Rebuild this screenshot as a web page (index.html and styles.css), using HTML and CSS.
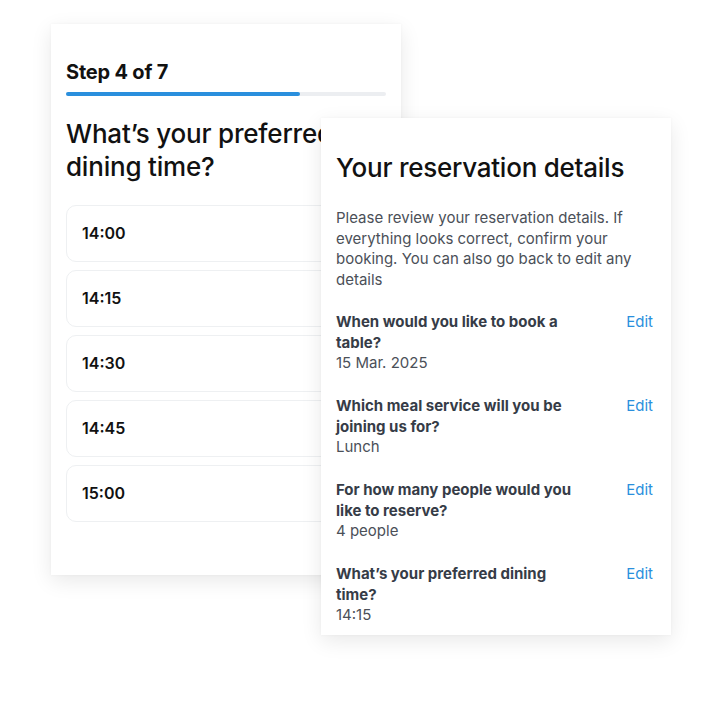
FILE: index.html
```html
<!DOCTYPE html>
<html lang="en">
<head>
    <meta charset="UTF-8">
    <title>Reservation</title>
    <link rel="stylesheet" href="styles.css">
</head>
<body>
    <div class="stage">
        <!-- 단계 카드 -->
        <div class="card stepCard">
            <div class="stepLabel">Step 4 of 7</div>
            <div class="bar"><div class="barFill"></div></div>
            <h2 class="question">What’s your preferred dining time?</h2>
            <ul class="options">
                <li class="opt">14:00</li>
                <li class="opt">14:15</li>
                <li class="opt">14:30</li>
                <li class="opt">14:45</li>
                <li class="opt">15:00</li>
            </ul>
        </div>

        <!-- 예약 요약 카드 -->
        <div class="card summary">
            <h2 class="sumTit">Your reservation details</h2>
            <p class="intro">Please review your reservation details. If everything looks correct, confirm your booking. You can also go back to edit any details</p>
            <div class="item">
                <div class="itemTxt">
                    <div class="itemQ">When would you like to book a table?</div>
                    <div class="itemA">15 Mar. 2025</div>
                </div>
                <a class="edit">Edit</a>
            </div>
            <div class="item">
                <div class="itemTxt">
                    <div class="itemQ">Which meal service will you be joining us for?</div>
                    <div class="itemA">Lunch</div>
                </div>
                <a class="edit">Edit</a>
            </div>
            <div class="item">
                <div class="itemTxt">
                    <div class="itemQ">For how many people would you like to reserve?</div>
                    <div class="itemA">4 people</div>
                </div>
                <a class="edit">Edit</a>
            </div>
            <div class="item">
                <div class="itemTxt">
                    <div class="itemQ">What’s your preferred dining time?</div>
                    <div class="itemA">14:15</div>
                </div>
                <a class="edit">Edit</a>
            </div>
        </div>
    </div>
</body>
</html>
```

FILE: styles.css
```css
* {
    box-sizing: border-box;
}
body {
    margin: 0;
    background-color: #fff;
    font-family: Inter, "Liberation Sans", sans-serif;
    color: #111;
}
.stage {
    position: relative;
    width: 708px;
    height: 708px;
}

/* 카드 공통 */
.card {
    position: absolute;
    width: 350px;
    background-color: #fff;
    box-shadow: 0 6px 20px rgba(0, 0, 0, 0.09), 0 0 3px rgba(0, 0, 0, 0.04);
}

/* 왼쪽 단계 카드 */
.stepCard {
    top: 24px;
    left: 51px;
    height: 551px;
    padding: 36px 15px 0;
}
.stepLabel {
    font-size: 20px;
    line-height: 24px;
    font-weight: 700;
    letter-spacing: -0.2px;
}
.bar {
    height: 4px;
    margin-top: 8px;
    border-radius: 2px;
    background-color: #eceef1;
}
.barFill {
    width: 73%;
    height: 100%;
    border-radius: 2px;
    background-color: #2a8fdd;
}
.question {
    margin: 21px 0 0;
    font-size: 26px;
    line-height: 33px;
    font-weight: 500;
    letter-spacing: -0.2px;
}
.options {
    list-style: none;
    margin: 22px 0 0;
    padding: 0;
    display: flex;
    flex-direction: column;
    gap: 8px;
}
.opt {
    height: 57px;
    padding-left: 15px;
    border: 1px solid #eef0f2;
    border-radius: 10px;
    font-size: 16px;
    font-weight: 600;
    line-height: 55px;
}

/* 오른쪽 요약 카드 */
.summary {
    top: 118px;
    left: 321px;
    height: 517px;
    padding: 33px 18px 0 15px;
}
.sumTit {
    margin: 0;
    font-size: 26px;
    line-height: 33px;
    font-weight: 500;
    letter-spacing: -0.25px;
}
.intro {
    margin: 24px 0 0;
    font-size: 15px;
    line-height: 20.5px;
    color: #4b5058;
}
.item {
    display: flex;
    justify-content: space-between;
    gap: 20px;
    margin-top: 22px;
    font-size: 15px;
    line-height: 20.5px;
}
.item + .item {
    margin-top: 22.5px;
}
.itemTxt {
    width: 250px;
}
.itemQ {
    font-weight: 700;
    color: #363c47;
}
.itemA {
    color: #4b5058;
}
.edit {
    color: #2a8fdd;
    cursor: pointer;
}
```
